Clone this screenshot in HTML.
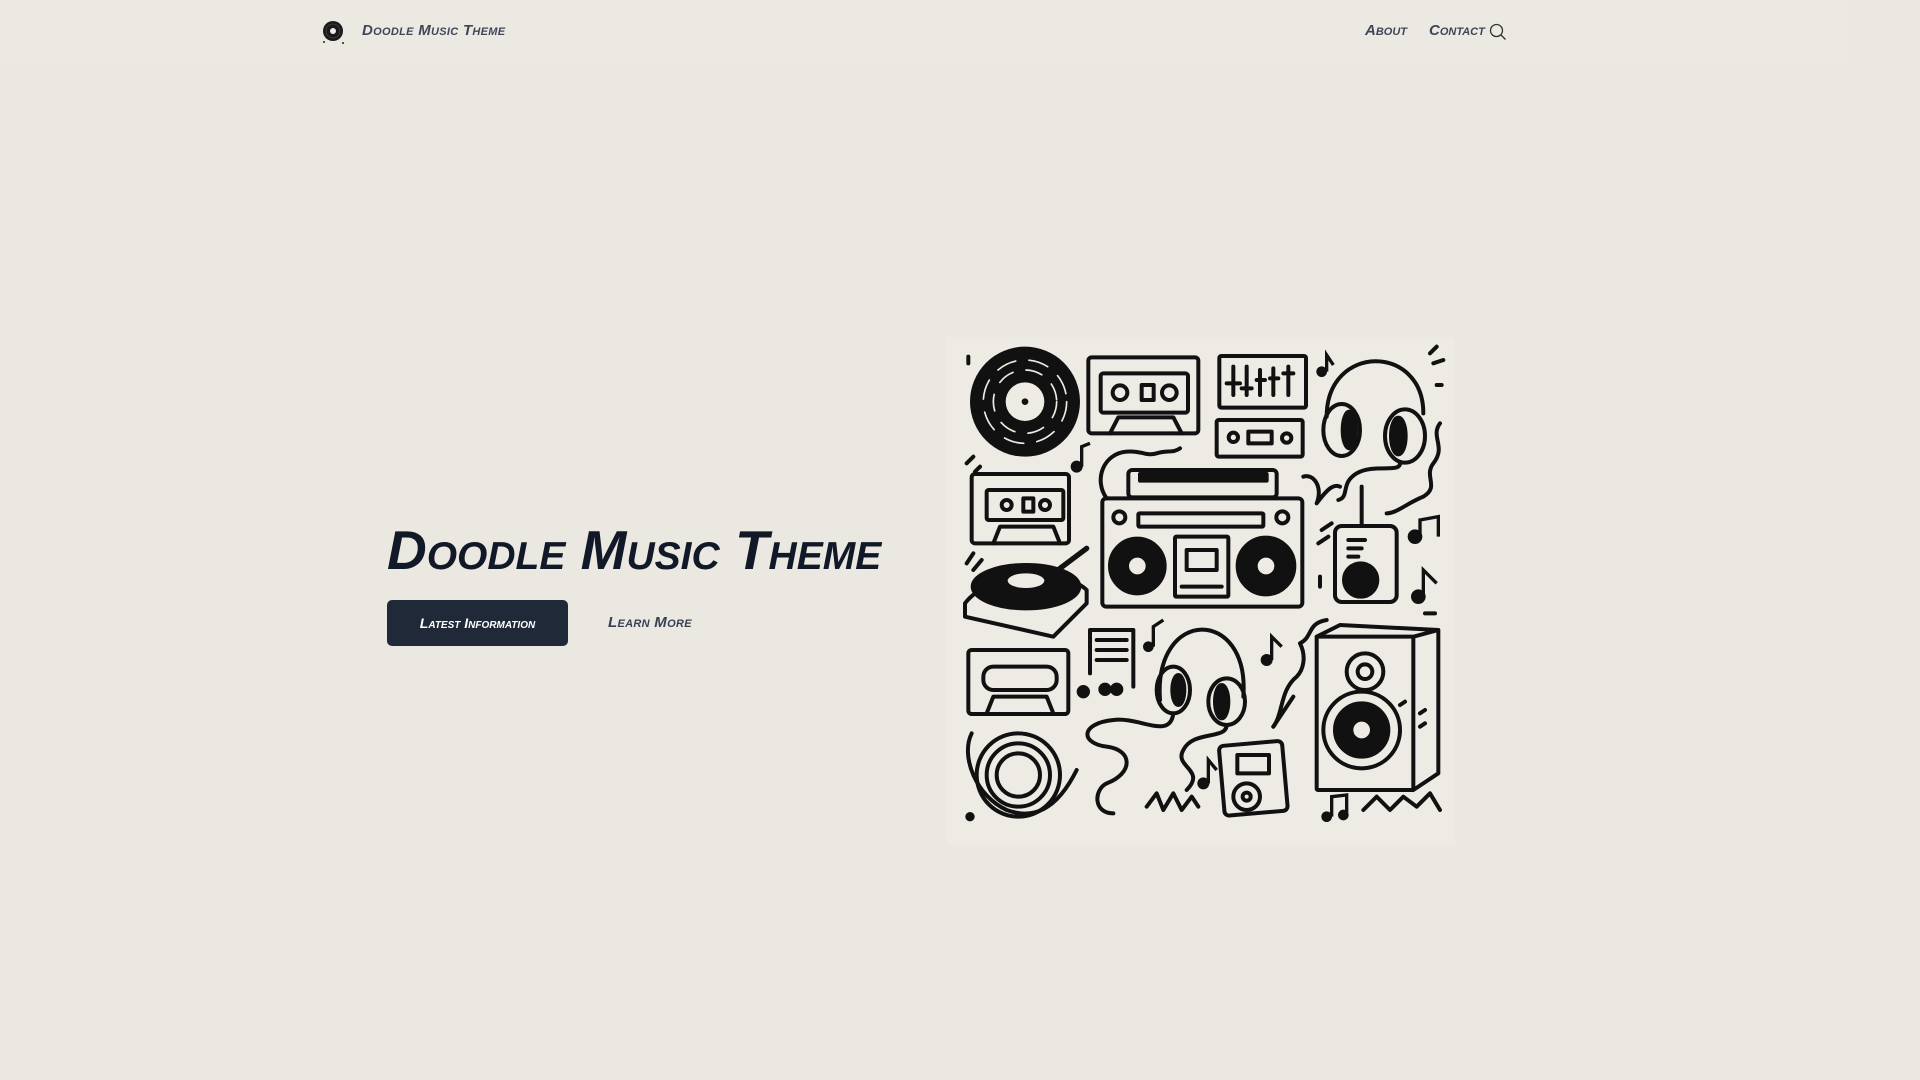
<!DOCTYPE html>
<html><head><meta charset="utf-8"><style>
html,body{margin:0;padding:0;width:1920px;height:1080px;overflow:hidden;background:#ebe8e1;font-family:"Liberation Sans",sans-serif}
.hdr{position:absolute;left:0;top:0;width:1845px;height:64px;background:#ece9e2}
.brand{position:absolute;left:362px;top:22px;font-size:15px;font-weight:bold;font-variant:small-caps;font-style:italic;color:#3f4656;letter-spacing:0.3px}
.nav{position:absolute;top:22px;font-size:15px;font-weight:bold;font-variant:small-caps;font-style:italic;color:#3f4656}
h1{position:absolute;left:387px;top:518px;margin:0;font-size:55px;font-weight:900;font-variant:small-caps;font-style:italic;color:#111827;letter-spacing:0px;white-space:nowrap}
.btn{position:absolute;left:387px;top:600px;width:181px;height:46px;background:#1f2937;border-radius:5px;color:#fff;font-size:14px;font-weight:bold;font-style:italic;font-variant:small-caps;text-align:center;line-height:46px}
.lm{position:absolute;left:608px;top:614px;font-size:15px;font-weight:bold;font-style:italic;font-variant:small-caps;color:#374151;letter-spacing:0.3px}
</style></head><body>
<div class="hdr"></div>
<svg style="position:absolute;left:320px;top:18px" width="28" height="28" viewBox="0 0 28 28"><circle cx="13" cy="13" r="10" fill="#1a1a1a"/><circle cx="13" cy="13" r="3" fill="#eee"/><circle cx="13" cy="13" r="7" fill="none" stroke="#555" stroke-width="0.6"/><circle cx="4" cy="24" r="1" fill="#222"/><circle cx="23" cy="25" r="1" fill="#222"/></svg>
<div class="brand">Doodle Music Theme</div>
<div class="nav" style="left:1365px">About</div>
<div class="nav" style="left:1429px">Contact</div>
<svg style="position:absolute;left:1489px;top:23px" width="18" height="18" viewBox="0 0 18 18"><circle cx="7.5" cy="7.5" r="6" fill="none" stroke="#333" stroke-width="1.3"/><line x1="12" y1="12" x2="16.5" y2="16.5" stroke="#333" stroke-width="1.3"/></svg>
<h1>Doodle Music Theme</h1>
<div class="btn">Latest Information</div>
<div class="lm">Learn More</div>
<svg style="position:absolute;left:940px;top:330px" width="520" height="520" viewBox="0 0 1560 1560">
<rect x="21" y="21" width="1524" height="1524" fill="#eeebe5"/>
<g fill="none" stroke="#111" stroke-width="12" stroke-linecap="round" stroke-linejoin="round">
<circle cx="255" cy="215" r="165" fill="#111" stroke="none"/>
<circle cx="255" cy="215" r="125" stroke="#eeebe5" stroke-width="5" stroke-dasharray="60 40"/>
<circle cx="255" cy="215" r="95" stroke="#eeebe5" stroke-width="5" stroke-dasharray="50 40"/>
<circle cx="255" cy="215" r="58" fill="#eeebe5" stroke="none"/>
<circle cx="255" cy="215" r="10" fill="#111" stroke="none"/>
<rect x="445" y="82" width="330" height="228" rx="10"/>
<rect x="482" y="130" width="262" height="118" rx="8"/>
<circle cx="540" cy="188" r="22"/><circle cx="688" cy="188" r="22"/><rect x="605" y="165" width="36" height="45"/>
<path d="M510 310 L535 262 L700 262 L725 310"/>
<rect x="838" y="78" width="260" height="155" rx="6"/>
<path d="M880 110v85M920 110v85M960 120v75M1000 115v80M1045 110v85M860 160h40M905 175h30M950 150h25M990 145h25M1030 130h30"/>
<rect x="830" y="270" width="258" height="110" rx="6"/>
<circle cx="880" cy="322" r="14"/><rect x="925" y="305" width="70" height="35"/><circle cx="1040" cy="324" r="14"/>
<path d="M1160 260 C1160 40 1450 40 1450 250"/>
<ellipse cx="1205" cy="300" rx="55" ry="78"/><ellipse cx="1228" cy="300" rx="20" ry="55" fill="#111"/>
<ellipse cx="1395" cy="318" rx="60" ry="80"/><ellipse cx="1375" cy="318" rx="22" ry="55" fill="#111"/>
<path d="M1380 400 C1380 430 1300 400 1250 430 C1200 460 1230 500 1195 510"/>
<path d="M1500 280 C1470 320 1520 350 1480 400 C1450 440 1500 470 1450 500 C1400 520 1370 550 1340 550"/>
<path d="M1090 440 C1120 430 1150 470 1130 520 C1160 480 1180 460 1200 470"/>
<rect x="95" y="432" width="292" height="208" rx="10"/>
<rect x="140" y="480" width="230" height="90" rx="6"/>
<circle cx="200" cy="525" r="15"/><circle cx="315" cy="525" r="15"/><rect x="250" y="505" width="30" height="40"/>
<path d="M160 640 L180 590 L340 590 L360 640"/>
<rect x="565" y="420" width="445" height="82" rx="12"/>
<rect x="600" y="432" width="380" height="20" fill="#111"/>
<rect x="487" y="505" width="600" height="325" rx="12"/>
<path d="M500 505 C460 450 490 370 560 365 C600 360 620 380 650 370 C680 360 700 370 720 355"/>
<rect x="595" y="550" width="375" height="40" rx="4"/>
<circle cx="538" cy="562" r="18"/><circle cx="1027" cy="562" r="18"/>
<circle cx="592" cy="708" r="82" fill="#111"/><circle cx="592" cy="708" r="25" fill="#eeebe5" stroke="none"/>
<circle cx="978" cy="708" r="85" fill="#111"/><circle cx="978" cy="708" r="25" fill="#eeebe5" stroke="none"/>
<rect x="705" y="620" width="160" height="180" rx="4"/><rect x="740" y="660" width="90" height="60"/>
<path d="M725 770h120"/>
<path d="M1265 470v110"/>
<rect x="1185" y="588" width="185" height="228" rx="20"/>
<circle cx="1262" cy="750" r="50" fill="#111"/>
<path d="M1225 630h50M1225 655h40M1225 680h30"/>
<path d="M75 820 C150 720 380 720 440 780 L440 820 L340 920 L75 860 Z"/>
<ellipse cx="258" cy="770" rx="160" ry="65" fill="#111"/>
<ellipse cx="258" cy="752" rx="55" ry="22" fill="#eeebe5" stroke="none"/>
<path d="M320 745 L440 655" stroke-width="16"/>
<rect x="85" y="960" width="300" height="192" rx="10"/>
<rect x="130" y="1010" width="220" height="70" rx="30"/>
<path d="M140 1150 L160 1100 L320 1100 L340 1150"/>
<path d="M450 900h130v170M450 900v130M470 930h90M470 960h90M470 990h90"/>
<circle cx="430" cy="1085" r="14" fill="#111"/><circle cx="495" cy="1078" r="14" fill="#111"/><circle cx="530" cy="1078" r="14" fill="#111"/>
<path d="M660 1110 C640 830 930 830 910 1100"/>
<ellipse cx="700" cy="1080" rx="50" ry="70"/><ellipse cx="715" cy="1080" rx="18" ry="45" fill="#111"/>
<ellipse cx="860" cy="1115" rx="55" ry="70"/><ellipse cx="845" cy="1115" rx="20" ry="50" fill="#111"/>
<path d="M700 1150 C690 1230 600 1160 520 1170 C420 1180 420 1240 500 1250 C580 1260 580 1330 500 1360 C460 1380 460 1450 520 1450"/>
<path d="M860 1185 C860 1230 760 1200 730 1260 C700 1310 800 1320 740 1380"/>
<path d="M1160 870 C1100 880 1120 920 1080 940 C1100 980 1090 1020 1070 1040 C1020 1080 1030 1150 1000 1190"/>
<path d="M1000 1190 L1060 1100"/>
<rect x="1130" y="920" width="290" height="460" rx="4"/>
<path d="M1130 920 L1200 885 L1495 900 L1420 920 M1495 900 L1495 1330 L1420 1380"/>
<circle cx="1275" cy="1025" r="55"/><circle cx="1275" cy="1025" r="22"/>
<circle cx="1265" cy="1200" r="115"/><circle cx="1265" cy="1200" r="80" fill="#111"/><circle cx="1265" cy="1200" r="25" fill="#eeebe5" stroke="none"/>
<circle cx="235" cy="1335" r="125"/><circle cx="235" cy="1335" r="95"/><circle cx="235" cy="1335" r="65"/>
<path d="M95 1210 C60 1280 110 1400 200 1440 C280 1470 350 1440 410 1320"/>
<rect x="845" y="1240" width="190" height="210" rx="14" transform="rotate(-5 940 1345)"/>
<rect x="892" y="1275" width="95" height="55"/>
<circle cx="920" cy="1400" r="40"/><circle cx="920" cy="1400" r="12"/>
<path d="M620 1430 l30 -40 l20 50 l30 -50 l25 50 l30 -40 l20 30"/>
<path d="M1270 1440 l40 -40 l40 40 l40 -40 l40 30 l40 -40 l30 50"/>
<path d="M85 80v20M1470 70l20 -20M1480 100l30 -10M1490 165h15M100 380l-20 20M120 410l-15 15M80 700l20 -30M100 720l25 -30M1145 600l30 -20M1135 640l30 -20M1140 740v30M1455 850h30M1380 1125l15 -10M1440 1150l15 -10M1440 1190l15 -10"/>
</g>
<g fill="#111"><circle cx="410" cy="410" r="18"/><circle cx="1145" cy="125" r="16"/><circle cx="1425" cy="620" r="22"/><circle cx="1435" cy="800" r="22"/><circle cx="625" cy="950" r="16"/><circle cx="980" cy="990" r="18"/><circle cx="790" cy="1360" r="18"/><circle cx="90" cy="1460" r="14"/><circle cx="1160" cy="1460" r="16"/><circle cx="1210" cy="1455" r="16"/></g>
<g fill="none" stroke="#111" stroke-width="10"><path d="M425 410v-60l25 -10M1160 125v-50l20 30M1440 620v-50l55 -10v60M1450 800v-80l40 40M640 950v-60l30 -20M995 990v-70l30 30M805 1360v-70l25 30M1175 1460v-60l45 -5v55"/></g>
</svg>
</body></html>
